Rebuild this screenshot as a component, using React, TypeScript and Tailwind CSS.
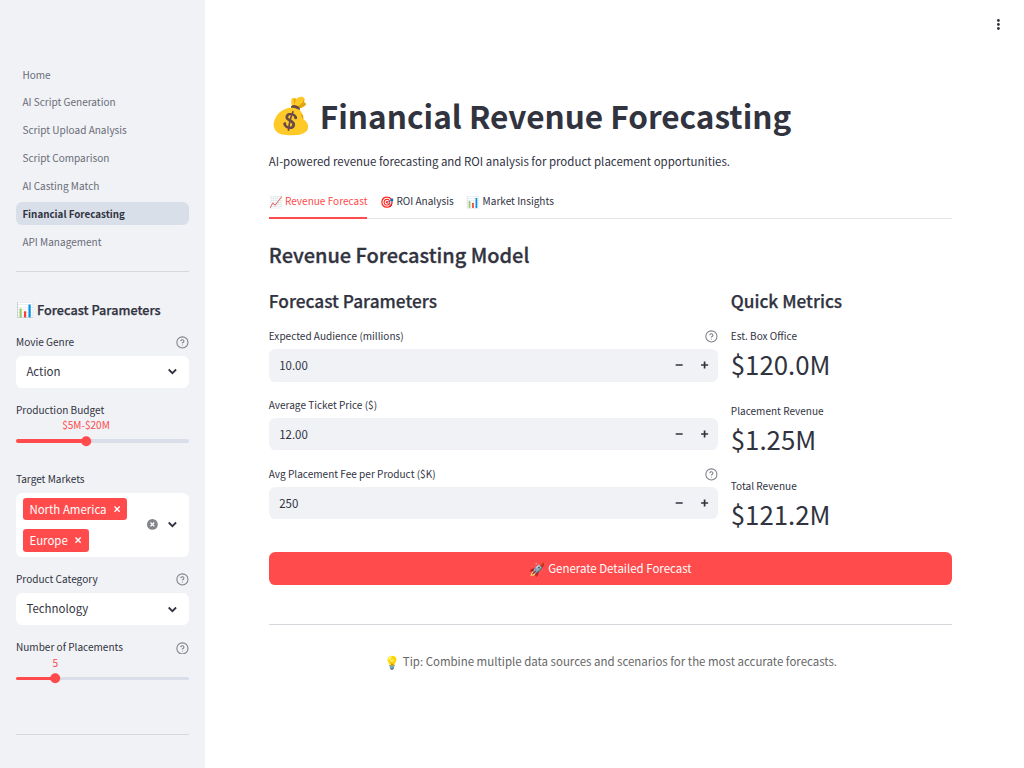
import type { ReactNode } from 'react';

const navItems = [
  'Home',
  'AI Script Generation',
  'Script Upload Analysis',
  'Script Comparison',
  'AI Casting Match',
  'Financial Forecasting',
  'API Management',
];

function HelpIcon() {
  return (
    <svg className="h-[12.8px] w-[12.8px] shrink-0" viewBox="0 0 24 24" fill="none" stroke="#7f818a" strokeWidth="2" strokeLinecap="round" strokeLinejoin="round">
      <circle cx="12" cy="12" r="10.4" />
      <path d="M9.09 9a3 3 0 0 1 5.83 1c0 2-3 3-3 3" />
      <path d="M12 17h.01" />
    </svg>
  );
}

function Chevron() {
  return (
    <svg className="h-[12.8px] w-[12.8px] shrink-0" viewBox="0 0 12.8 12.8" fill="none" stroke="#31333f" strokeWidth="1.8">
      <path d="M2.7 4.5l3.7 3.7 3.7-3.7" />
    </svg>
  );
}

function Label({ children, help }: { children: ReactNode; help?: boolean }) {
  return (
    <div className="flex h-[19.2px] items-start justify-between text-[10.06px] leading-[17px]">
      <span>{children}</span>
      {help && (
        <span className="flex h-[19.2px] items-center">
          <HelpIcon />
        </span>
      )}
    </div>
  );
}

function Select({ value }: { value: string }) {
  return (
    <div className="flex h-[32.4px] items-center justify-between rounded-[6.4px] bg-white pr-[10.4px] pl-[10.4px] text-[11.46px]">
      <span>{value}</span>
      <Chevron />
    </div>
  );
}

function Slider({ value, percent }: { value: string; percent: number }) {
  return (
    <div>
      <div className="relative h-[17px] text-[10.06px] leading-[16.4px] text-[#ff4b4b]">
        <span className="absolute -translate-x-1/2 whitespace-nowrap" style={{ left: `${percent}%` }}>
          {value}
        </span>
      </div>
      <div className="relative mt-[5px] h-[3.2px] rounded-full bg-[#d9dfe8]">
        <div className="h-full rounded-full bg-[#ff4b4b]" style={{ width: `${percent}%` }} />
        <div className="absolute top-1/2 h-[9.6px] w-[9.6px] -translate-x-1/2 -translate-y-1/2 rounded-full bg-[#ff4b4b]" style={{ left: `${percent}%` }} />
      </div>
    </div>
  );
}

function Tag({ children }: { children: ReactNode }) {
  return (
    <span className="flex h-[22.4px] items-center gap-[6.4px] rounded-[3.2px] bg-[#ff4b4b] pr-[6.4px] pl-[6.4px] text-[11.46px] text-white">
      {children}
      <svg className="h-[8px] w-[8px]" viewBox="0 0 8 8" stroke="white" strokeWidth="1.4">
        <path d="M1.5 1.5l5.2 5.2M6.7 1.5L1.5 6.7" />
      </svg>
    </span>
  );
}

function NumberInput({ label, value, help }: { label: string; value: string; help?: boolean }) {
  return (
    <div className="h-[68.8px]">
      <Label help={help}>{label}</Label>
      <div className="mt-[3px] flex h-[32.4px] items-center rounded-[6.4px] bg-[#f0f2f6] pl-[10.4px] text-[11.46px]">
        <span className="grow leading-[16px]">{value}</span>
        <svg className="h-[32px] w-[52px]" viewBox="0 0 52 32" stroke="#31333f" strokeWidth="1.7">
          <path d="M9.7 16h7M35.1 16h7M38.6 12.5v7" />
        </svg>
      </div>
    </div>
  );
}

function Metric({ label, value }: { label: string; value: string }) {
  return (
    <div className="h-[75.2px]">
      <div className="text-[10.06px] leading-[17px]">{label}</div>
      <div className="text-[25.8px] leading-[40.4px]">{value}</div>
    </div>
  );
}

export default function App() {
  return (
    <div className="flex h-[768px] w-[1024px] overflow-hidden bg-white font-['Noto_Sans_CJK_SC',sans-serif] text-[#31333f]">
      <aside className="w-[204.8px] shrink-0 bg-[#f0f2f6] px-[16px] pt-[63.2px]">
        <nav className="flex flex-col gap-[5.44px] text-[10.06px]">
          {navItems.map((item) =>
            item === 'Financial Forecasting' ? (
              <a key={item} className="flex h-[22.4px] items-center rounded-[6.4px] bg-[#d9dfe9] px-[6.4px] pt-px text-[9.8px] font-bold">
                {item}
              </a>
            ) : (
              <a key={item} className="flex h-[22.4px] items-center px-[6.4px] pb-[0.6px] text-[#6a6c76]">
                {item}
              </a>
            ),
          )}
        </nav>
        <hr className="mt-[18.7px] border-[#d6d8dd]" />
        <h2 className="mt-[26px] flex h-[22px] items-center text-[12.7px] font-medium [-webkit-text-stroke:0.25px_#31333f]">
          <span className="mr-[3px] text-[14.6px]">📊</span>Forecast Parameters
        </h2>
        <div className="mt-[12.8px]">
          <Label help>Movie Genre</Label>
          <div className="mt-[3.4px]">
            <Select value="Action" />
          </div>
        </div>
        <div className="mt-[13.2px] h-[68.8px]">
          <Label>Production Budget</Label>
          <div className="-mt-[3px]">
            <Slider value="$5M-$20M" percent={40.5} />
          </div>
        </div>
        <div>
          <Label>Target Markets</Label>
          <div className="mt-[3.6px] flex h-[64px] items-center rounded-[6.4px] bg-white pr-[10.4px] pl-[7px]">
            <div className="flex grow flex-col items-start gap-[8.8px]">
              <Tag>North America</Tag>
              <Tag>Europe</Tag>
            </div>
            <svg className="mr-[6.4px] h-[12.8px] w-[12.8px]" viewBox="0 0 12.8 12.8">
              <circle cx="6.4" cy="6.4" r="5.4" fill="#83858c" />
              <path d="M4.5 4.5l3.8 3.8M8.3 4.5l-3.8 3.8" stroke="white" strokeWidth="1.2" />
            </svg>
            <Chevron />
          </div>
        </div>
        <div className="mt-[13.2px]">
          <Label help>Product Category</Label>
          <div className="mt-[3.6px]">
            <Select value="Technology" />
          </div>
        </div>
        <div className="mt-[13.2px]">
          <Label help>Number of Placements</Label>
          <div className="-mt-[3px]">
            <Slider value="5" percent={22.7} />
          </div>
        </div>
        <hr className="mt-[54px] border-[#d6d8dd]" />
      </aside>
      <main className="flex min-w-0 grow flex-col">
        <header className="flex h-[48px] shrink-0 justify-end pr-[19px] pt-[18px]">
          <svg className="h-[13px] w-[13px]" viewBox="0 0 13 13" fill="#31333f">
            <circle cx="6.4" cy="2.5" r="1.4" />
            <circle cx="6.4" cy="6.5" r="1.4" />
            <circle cx="6.4" cy="10.5" r="1.4" />
          </svg>
        </header>
        <div className="mr-[72px] ml-[64px] flex flex-col">
          <h1 className="mt-[45.5px] flex h-[44px] items-center text-[31.55px] font-bold">
            <span className="mr-[7px] pb-[4px] text-[35.2px]">💰</span>Financial Revenue Forecasting
          </h1>
          <p className="mt-[13.5px] h-[20px] text-[11.48px] leading-[20px]">
            AI-powered revenue forecasting and ROI analysis for product placement opportunities.
          </p>
          <div className="mt-[13.5px] flex h-[34.5px] gap-[12.8px] border-b border-[#e3e4e7] text-[10.06px] leading-[32px]">
            <span className="flex h-[34.5px] border-b-2 border-[#ff4b4b] text-[#ff4b4b]">
              <span className="mr-[2.2px] text-[11.2px]">📈</span>Revenue Forecast
            </span>
            <span className="flex">
              <span className="mr-[2.2px] text-[11.2px]">🎯</span>ROI Analysis
            </span>
            <span className="flex">
              <span className="mr-[2.2px] text-[11.2px]">📊</span>Market Insights
            </span>
          </div>
          <h2 className="mt-[20px] h-[33px] text-[19.95px] leading-[32px] font-medium [-webkit-text-stroke:0.3px_#31333f]">
            Revenue Forecasting Model
          </h2>
          <div className="mt-[13px] flex h-[267px] gap-[12.8px]">
            <section className="w-[449.2px]">
              <h3 className="mb-[10px] h-[32px] text-[17.25px] leading-[32px] font-medium [-webkit-text-stroke:0.25px_#31333f]">
                Forecast Parameters
              </h3>
              <NumberInput label="Expected Audience (millions)" value="10.00" help />
              <NumberInput label="Average Ticket Price ($)" value="12.00" />
              <NumberInput label="Avg Placement Fee per Product ($K)" value="250" help />
            </section>
            <section>
              <h3 className="mb-[10px] h-[32px] text-[17.25px] leading-[32px] font-medium [-webkit-text-stroke:0.25px_#31333f]">
                Quick Metrics
              </h3>
              <Metric label="Est. Box Office" value="$120.0M" />
              <Metric label="Placement Revenue" value="$1.25M" />
              <Metric label="Total Revenue" value="$121.2M" />
            </section>
          </div>
          <button className="flex h-[32.8px] items-center justify-center rounded-[6.4px] bg-[#ff4b4b] text-[11.46px] text-white">
            <span className="mr-[3px] text-[12.8px]">🚀</span>Generate Detailed Forecast
          </button>
          <hr className="mt-[39.3px] border-[#d6d8dd]" />
          <p className="mt-[26.2px] flex h-[20px] items-center justify-center text-[11.46px] text-[#666666]">
            <span className="mr-[3px] text-[12.8px]">💡</span>Tip: Combine multiple data sources and scenarios for the most accurate forecasts.
          </p>
        </div>
      </main>
    </div>
  );
}
